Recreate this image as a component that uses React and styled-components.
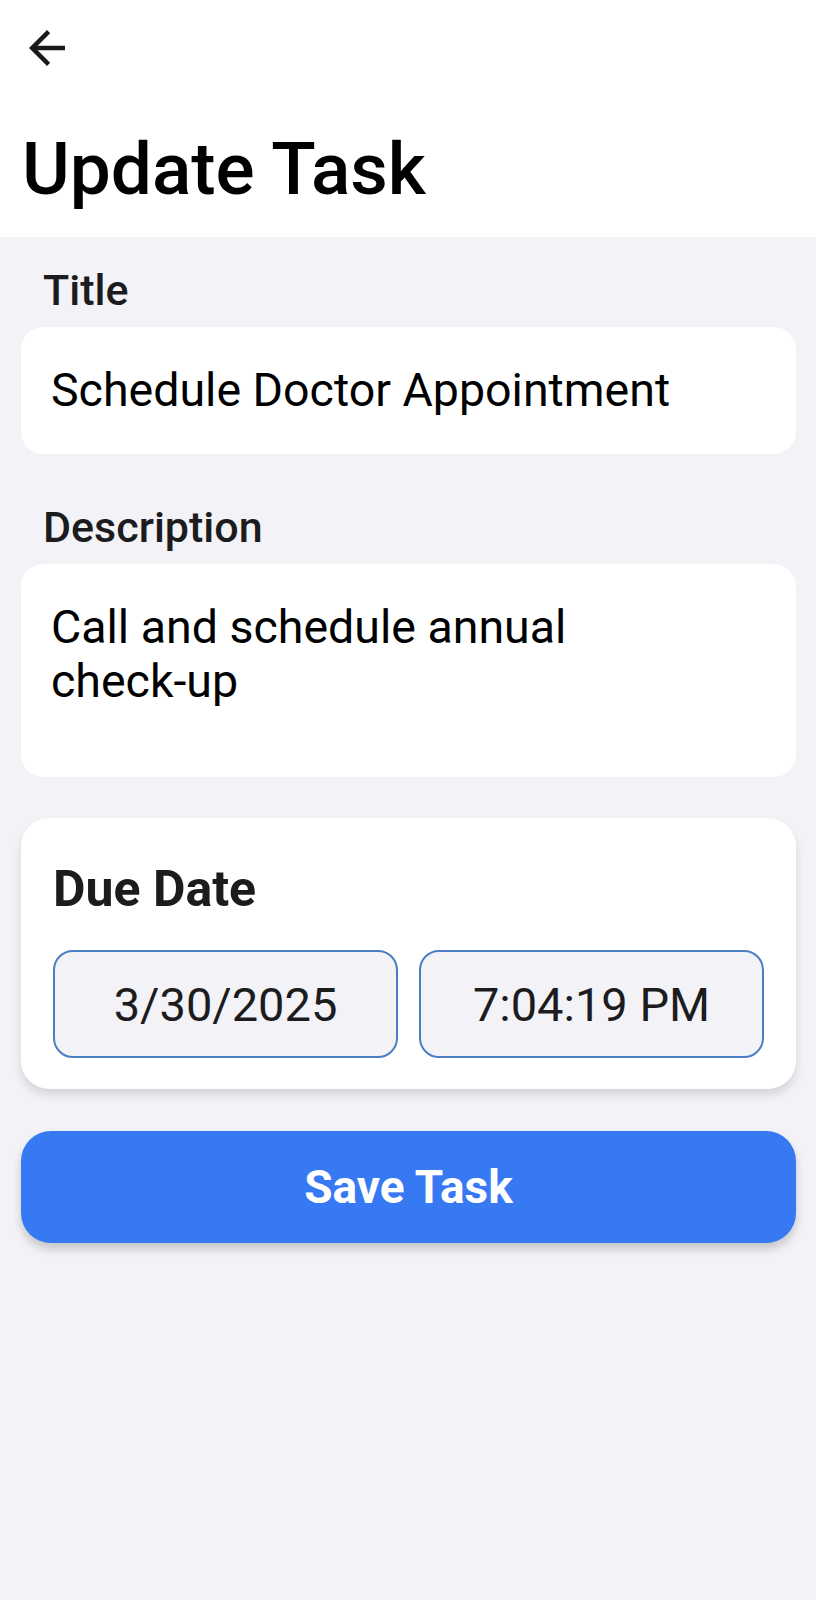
import React from "react";
import styled, { createGlobalStyle } from "styled-components";

const Color = {
  Page: "#f2f2f7",
  Card: "#ffffff",
  Ink: "#000000",
  Label: "#1c1c1e",
  Accent: "#3779f3",
  Border: "#4a7fc4",
};

const GlobalStyle = createGlobalStyle`
  html, body {
    margin: 0;
    padding: 0;
    background: ${Color.Page};
  }
  body {
    font-family: Roboto, "Noto Sans", sans-serif;
  }
  * {
    box-sizing: border-box;
  }
`;

const Screen = styled.div`
  width: 816px;
  min-height: 1600px;
  background: ${Color.Page};
`;

const Header = styled.header`
  background: #ffffff;
  padding: 21px 0 24px 22px;
`;

const BackButton = styled.button`
  display: block;
  width: 54px;
  height: 54px;
  margin-left: -2px;
  padding: 0;
  border: none;
  background: none;
  color: #1a1a1a;
  cursor: pointer;
`;

const PageTitle = styled.h1`
  margin: 50px 0 0;
  font-size: 73px;
  font-weight: 500;
  line-height: 88px;
  color: ${Color.Ink};
`;

const Form = styled.main`
  display: flex;
  flex-direction: column;
  padding: 28px 20px 0 21px;
`;

const Field = styled.div`
  display: flex;
  flex-direction: column;
  gap: 12px;
  margin-bottom: ${({ $gap }) => $gap}px;
`;

const Label = styled.label`
  padding-left: 22px;
  font-size: 43px;
  font-weight: 500;
  line-height: 50px;
  color: ${Color.Label};
`;

const Input = styled.div`
  min-height: ${({ $minHeight }) => $minHeight || 127}px;
  padding: 36px 30px;
  border-radius: 22px;
  background: ${Color.Card};
  font-size: 46.5px;
  line-height: 54px;
  color: ${Color.Ink};
  padding-right: ${({ $wrap }) => ($wrap ? "200px" : "30px")};
`;

const DueCard = styled.section`
  padding: 42px 32px 31px;
  border-radius: 28px;
  background: ${Color.Card};
  box-shadow: 0 6px 10px rgba(0, 0, 0, 0.12);
`;

const CardTitle = styled.h2`
  margin: 0 0 32px;
  font-size: 50px;
  font-weight: 700;
  line-height: 58px;
  color: ${Color.Label};
`;

const PickerRow = styled.div`
  display: grid;
  grid-template-columns: 1fr 1fr;
  gap: 21px;
`;

const Picker = styled.button`
  height: 108px;
  border: 2px solid ${Color.Border};
  border-radius: 20px;
  background: ${Color.Page};
  font-family: Roboto, sans-serif;
  font-size: 47px;
  color: ${Color.Label};
  cursor: pointer;
`;

const SaveButton = styled.button`
  margin-top: 42px;
  height: 112px;
  border: none;
  border-radius: 30px;
  background: ${Color.Accent};
  box-shadow: 0 6px 10px rgba(0, 0, 0, 0.18);
  font-family: Roboto, sans-serif;
  font-size: 46px;
  font-weight: 700;
  color: #ffffff;
  cursor: pointer;
`;

function ArrowBack() {
  return (
    <svg width="54" height="54" viewBox="0 0 24 24" fill="currentColor">
      <path d="M20 11H7.83l5.59-5.59L12 4l-8 8 8 8 1.41-1.41L7.83 13H20v-2z" />
    </svg>
  );
}

export default function App() {
  return (
    <Screen>
      <GlobalStyle />
      <Header>
        <BackButton aria-label="Back">
          <ArrowBack />
        </BackButton>
        <PageTitle>Update Task</PageTitle>
      </Header>

      <Form>
        <Field $gap={48}>
          <Label>Title</Label>
          <Input>Schedule Doctor Appointment</Input>
        </Field>

        <Field $gap={41}>
          <Label>Description</Label>
          <Input $minHeight={213} $wrap>
            Call and schedule annual check-up
          </Input>
        </Field>

        <DueCard>
          <CardTitle>Due Date</CardTitle>
          <PickerRow>
            <Picker>3/30/2025</Picker>
            <Picker>7:04:19 PM</Picker>
          </PickerRow>
        </DueCard>

        <SaveButton>Save Task</SaveButton>
      </Form>
    </Screen>
  );
}
